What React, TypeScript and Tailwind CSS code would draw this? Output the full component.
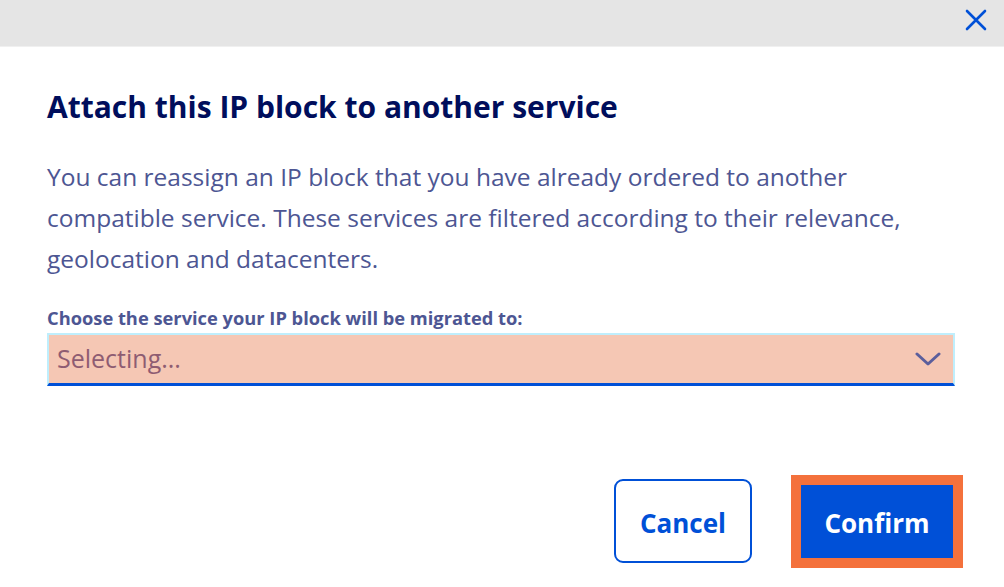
import React from "react";

export default function App() {
  return (
    <div className="w-[1004px] h-[587px] bg-white overflow-hidden" style={{ fontFamily: "'Open Sans', sans-serif" }}>
      <div className="h-[47px] bg-[#e5e5e5] border-b border-[#f0f0f0] flex items-start justify-end pr-[17px] pt-[9px]">
        <svg width="22" height="22" viewBox="0 0 22 22" fill="none" stroke="#0050d7" strokeWidth="2.6" strokeLinecap="round">
          <path d="M2 2 L20 20 M20 2 L2 20" />
        </svg>
      </div>
      <div className="pl-[47px] pr-[49px]">
        <h1 className="mt-[42px] text-[30px] leading-[36px] font-bold text-[#000e5c]">Attach this IP block to another service</h1>
        <p className="mt-[31px] w-[890px] text-[24.5px] leading-[41px] text-[#4d5693]">
          You can reassign an IP block that you have already ordered to another compatible service. These services are filtered according to their relevance, geolocation and datacenters.
        </p>
        <div className="mt-[28px] text-[18.3px] leading-[22px] font-bold text-[#4d5693]">Choose the service your IP block will be migrated to:</div>
        <div className="mt-[4px] h-[53px] bg-[#f5c7b4] border-2 border-[#bfeefc] border-b-[3px] border-b-[#0050d7] flex items-center justify-between pl-[8px] pr-[12px]">
          <span className="text-[25px] text-[#8e5c72]">Selecting...</span>
          <svg width="26" height="14" viewBox="0 0 26 14" fill="none" stroke="#5b5e9c" strokeWidth="3" strokeLinecap="round" strokeLinejoin="round">
            <path d="M2 2 L13 12 L24 2" />
          </svg>
        </div>
        <div className="mt-[89px] flex justify-end items-start gap-[39px]">
          <button className="mt-[4px] w-[138px] h-[84px] pt-[5px] rounded-[9px] border-2 border-[#0050d7] bg-white text-[#0050d7] text-[26px] font-bold">Cancel</button>
          <div className="border-[10px] border-[#f4713c] mr-[-8px]">
            <button className="w-[152px] h-[73px] pt-[4px] bg-[#0050d7] text-white text-[26px] font-bold block">Confirm</button>
          </div>
        </div>
      </div>
    </div>
  );
}
